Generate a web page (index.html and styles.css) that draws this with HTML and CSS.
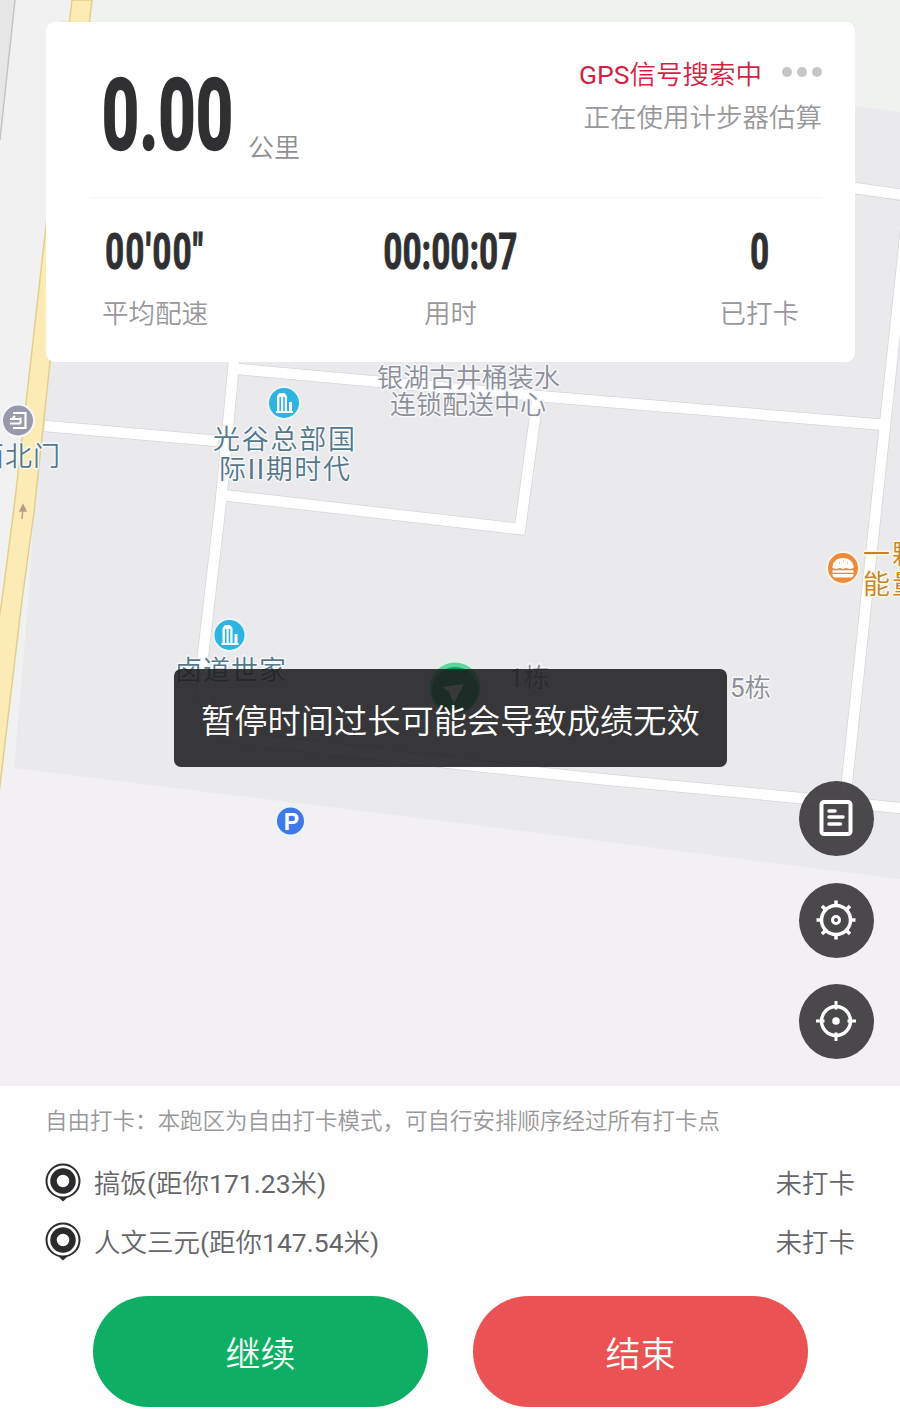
FILE: index.html
```
<!DOCTYPE html>
<html lang="zh-CN">
<head>
  <meta charset="UTF-8">
  <title>自由跑</title>
  <link rel="stylesheet" href="styles.css">
</head>
<body>

  <div class="run-page">
    <div class="map-area">
      <svg class="map" width="900" height="1086" viewBox="0 0 900 1086">
        <!-- land -->
        <rect width="900" height="1086" fill="#f2f0f3"/>
        <rect width="900" height="120" fill="#f0f2f0"/>
        <path d="M0 0H95L14 768H0Z" fill="#f1f1f2"/>
        <path d="M0 0H15L0 140Z" fill="#e6e6e6"/>
        <path d="M15 0L0 140" stroke="#c4c4c4" stroke-width="1.5"/>
        <path d="M60 20L856 106L900 112V879L450 822L14 768L30 580Z" fill="#eae9eb"/>

        <!-- main road -->
        <path d="M72 0L45 235L32 350L15 500L2 600L-2 625V800L0 785L22 600L34 512L50 362L92 0Z" fill="#fdebb6" stroke="#e3cf8c" stroke-width="1.5"/>

        <!-- side streets: outline first, then the white fill -->
        <g class="road-edge">
          <path d="M236 340L221 500L203 655Q196 725 240 738L450 763L600 779L800 798L910 809"/>
          <path d="M45 426L218 441"/>
          <path d="M238 369L370 381L550 397L886 425"/>
          <path d="M907 220L893 350L861 650L845 800"/>
          <path d="M840 186L910 196"/>
          <path d="M222 495L450 521L520 529L538 395"/>
        </g>
        <g class="road-fill">
          <path d="M236 340L221 500L203 655Q196 725 240 738L450 763L600 779L800 798L910 809"/>
          <path d="M45 426L218 441"/>
          <path d="M238 369L370 381L550 397L886 425"/>
          <path d="M907 220L893 350L861 650L845 800"/>
          <path d="M840 186L910 196"/>
          <path d="M222 495L450 521L520 529L538 395"/>
        </g>
        <path d="M22 519L23 507M20 511L23 505L26 511Z" fill="#b79f85" stroke="#b79f85" stroke-width="1.5"/>

        <!-- labels -->
        <g class="label label-grey">
          <text x="377" y="387" textLength="183">银湖古井桶装水</text>
          <text x="390" y="414" textLength="156">连锁配送中心</text>
          <text x="509" y="687"><tspan class="latin">1</tspan>栋</text>
          <text x="730" y="697"><tspan class="latin">5</tspan>栋</text>
        </g>
        <g class="label label-blue">
          <text x="213" y="449" textLength="142">光谷总部国</text>
          <text x="219" y="479" textLength="131">际<tspan class="latin">II</tspan>期时代</text>
          <text x="-23" y="466" textLength="83">西北门</text>
          <text x="175" y="680" textLength="111">卤道世家</text>
        </g>
        <g class="label label-orange">
          <text x="863" y="564" textLength="56">一颗</text>
          <text x="863" y="594" textLength="56">能量</text>
        </g>

        <!-- markers -->
        <g transform="translate(284 403)">
          <circle r="16" fill="#2fb3e0" stroke="#e9f6fb" stroke-width="2"/>
          <path d="M-8 10V8H-7V-7L-4.500 -10H0.500L3 -7V8H5V-1H8V8H9V10Z" fill="#fff"/>
          <path d="M-3.800 -6V8M0 -6V8" stroke="#2fb3e0" stroke-width="1.6"/>
        </g>
        <g transform="translate(229.500 635)">
          <circle r="16" fill="#2fb3e0" stroke="#e9f6fb" stroke-width="2"/>
          <path d="M-8 10V8H-7V-7L-4.500 -10H0.500L3 -7V8H5V-1H8V8H9V10Z" fill="#fff"/>
          <path d="M-3.800 -6V8M0 -6V8" stroke="#2fb3e0" stroke-width="1.6"/>
        </g>
        <g transform="translate(18 420.500)">
          <circle r="16" fill="#9899aa" stroke="#f7f7fa" stroke-width="2"/>
          <path d="M-5 -7.500H7.500V7.500H-5M-8 -1.500H2.500M-6 -1.500L-3 -4.500M-8 3H2.500M2.500 -3V3" fill="none" stroke="#fff" stroke-width="2.2"/>
        </g>
        <g transform="translate(843 568)">
          <circle r="16" fill="#ec8b3b" stroke="#fdf3e6" stroke-width="2"/>
          <path d="M-10.500 0C-11 -6 -6 -10 0 -10S11 -6 10.500 0L7 1L3 0L0 1L-3 0L-7 1ZM-10.500 6H10.500V7Q10 9.500 8 9.500H-8Q-10 9.500 -10.500 7Z" fill="#fff"/>
          <path d="M-10.500 3.500H10.500" stroke="#fff" stroke-width="2.4"/>
          <path d="M-4 -5h1M0 -7h1M4 -5h1" stroke="#ec8b3b"/>
        </g>
        <g transform="translate(290.500 821)">
          <circle r="14.500" fill="#3f78e8" stroke="#e8f3fc" stroke-width="2"/>
          <text class="parking" x="1" y="8.500">P</text>
        </g>

        <!-- own position -->
        <circle cx="455" cy="688" r="29" fill="#ddf5ea" fill-opacity="0.7"/>
        <circle cx="455" cy="688" r="25.500" fill="#5fd3a0"/>
        <circle cx="455" cy="690" r="23" fill="#08a05a"/>
        <path d="M442 687L464 684L454 703L449 692Z" fill="#fff"/>
      </svg>

      <div class="data-card">
        <div class="card-top">
          <div class="distance">
            <span class="distance-num">0.00</span>
            <span class="distance-unit">公里</span>
          </div>
          <div class="gps">
            <div class="gps-status">
              <span class="latin">GPS</span>信号搜索中
              <span class="dots"><i></i><i></i><i></i></span>
            </div>
            <div class="gps-tip">正在使用计步器估算</div>
          </div>
        </div>
        <div class="stats">
          <div class="stat">
            <div class="stat-num pace">00'00"</div>
            <div class="stat-name">平均配速</div>
          </div>
          <div class="stat">
            <div class="stat-num">00:00:07</div>
            <div class="stat-name">用时</div>
          </div>
          <div class="stat">
            <div class="stat-num">0</div>
            <div class="stat-name">已打卡</div>
          </div>
        </div>
      </div>

      <div class="toast">暂停时间过长可能会导致成绩无效</div>

      <div class="tools">
        <button class="tool">
          <svg width="45" height="45" viewBox="-22 -22 45 45">
            <rect x="-14.500" y="-16" width="29" height="32" rx="2.500" stroke-width="4"/>
            <path d="M-7 -7H-1M-7 -1H7M-7 6H4.500" stroke-width="3.500" stroke-linecap="round"/>
          </svg>
        </button>
        <button class="tool">
          <svg width="45" height="45" viewBox="-22 -22 45 45">
            <circle r="14.500" stroke-width="3.500"/>
            <circle r="3.500" stroke-width="3"/>
            <path d="M0 -15V-19.500M0 15V19.500M-15 0H-19.500M15 0H19.500M-10.500 -10.500L-14 -14M10.500 -10.500L14 -14M-10.500 10.500L-14 14M10.500 10.500L14 14" stroke-width="3.500"/>
          </svg>
        </button>
        <button class="tool">
          <svg width="45" height="45" viewBox="-22 -22 45 45">
            <circle r="14.500" stroke-width="3.500"/>
            <circle r="3.800" fill="#fff" stroke="none"/>
            <path d="M0 -11.500V-20M0 11.500V20M-11.500 0H-20M11.500 0H20" stroke-width="3"/>
          </svg>
        </button>
      </div>
    </div>

    <div class="panel">
      <p class="panel-tip">自由打卡：本跑区为自由打卡模式，可自行安排顺序经过所有打卡点</p>
      <div class="point">
        <svg class="pin" width="36" height="40" viewBox="0 0 36 40">
          <path d="M12 33L18 38.500L24 33Z" fill="#2b2b2e"/>
          <circle cx="18" cy="18" r="16.500" fill="#fff" stroke="#2b2b2e" stroke-width="2"/>
          <circle cx="18" cy="18" r="9.500" fill="#fff" stroke="#2b2b2e" stroke-width="6.500"/>
        </svg>
        <span class="point-name">搞饭<span class="latin">(</span>距你<span class="latin">171.23</span>米<span class="latin">)</span></span>
        <span class="point-state">未打卡</span>
      </div>
      <div class="point">
        <svg class="pin" width="36" height="40" viewBox="0 0 36 40">
          <path d="M12 33L18 38.500L24 33Z" fill="#2b2b2e"/>
          <circle cx="18" cy="18" r="16.500" fill="#fff" stroke="#2b2b2e" stroke-width="2"/>
          <circle cx="18" cy="18" r="9.500" fill="#fff" stroke="#2b2b2e" stroke-width="6.500"/>
        </svg>
        <span class="point-name">人文三元<span class="latin">(</span>距你<span class="latin">147.54</span>米<span class="latin">)</span></span>
        <span class="point-state">未打卡</span>
      </div>
      <div class="actions">
        <button class="btn btn-continue">继续</button>
        <button class="btn btn-end">结束</button>
      </div>
    </div>
  </div>

</body>
</html>
```
FILE: styles.css
```
* {
  box-sizing: border-box;
  margin: 0;
  padding: 0;
}

body {
  font-family: Roboto, "Noto Sans CJK SC", sans-serif;
  font-weight: 350;
  background: #fff;
}

button {
  border: none;
  font-family: inherit;
  cursor: pointer;
}

.latin {
  font-weight: 400;
}

.run-page {
  width: 900px;
  height: 1428px;
  overflow: hidden;
}

/* map */
.map-area {
  position: relative;
  height: 1086px;
  padding: 22px 45px 0 46px;
}

.map {
  position: absolute;
  top: 0;
  left: 0;
}

.road-edge path,
.road-fill path {
  fill: none;
  stroke: #d6d6da;
  stroke-width: 12px;
}

.road-fill path {
  stroke: #fff;
  stroke-width: 10.5px;
}

.label {
  font-size: 26px;
  paint-order: stroke;
  stroke: #f6f7f9;
  stroke-width: 3px;
  stroke-linejoin: round;
}

.label-grey {
  fill: #8c8e98;
}

.label-blue {
  font-size: 27px;
  fill: #54788a;
}

.label-orange {
  font-size: 27px;
  fill: #c98524;
  stroke: #fdf6ea;
}

.parking {
  font-family: "Liberation Sans", sans-serif;
  font-size: 23px;
  font-weight: 700;
  fill: #fff;
  text-anchor: middle;
}

/* data card */
.data-card {
  position: relative;
  height: 340px;
  padding: 0 33px 0 44px;
  background: #fff;
  border-radius: 9px;
}

.card-top {
  display: flex;
  justify-content: space-between;
  height: 177px;
  padding-left: 12px;
  border-bottom: 2px solid #f9f9f9;
}

.distance {
  display: flex;
  align-items: flex-start;
  padding-top: 34px;
}

.distance-num {
  width: 146px;
  font-size: 99px;
  line-height: 118px;
  font-weight: 700;
  color: #303032;
  -webkit-text-stroke: 2.5px #303032;
  letter-spacing: 0.8px;
  transform: scaleX(0.65);
  transform-origin: left;
}

.distance-unit {
  margin-top: 72px;
  font-size: 26px;
  line-height: 40px;
  color: #909092;
}

.gps {
  padding-top: 33px;
  text-align: right;
  font-size: 26.5px;
  line-height: 40px;
}

.gps-status {
  display: flex;
  align-items: center;
  justify-content: flex-end;
  color: #d41f45;
}

.dots {
  display: flex;
  gap: 5px;
  margin: -6px 0 0 20px;
}

.dots i {
  width: 10px;
  height: 10px;
  border-radius: 50%;
  background: #c6c6c8;
}

.gps-tip {
  margin-top: 3px;
  color: #98989c;
}

.stats {
  display: grid;
  grid-template-columns: 1fr auto 1fr;
  padding: 25px 23px 0 12px;
}

.stat {
  text-align: center;
}

.stat:first-child {
  justify-self: start;
  width: 106px;
}

.stat:last-child {
  justify-self: end;
}

.stat-num {
  display: flex;
  justify-content: center;
  font-size: 49.5px;
  line-height: 56px;
  font-weight: 700;
  white-space: nowrap;
  color: #303032;
  -webkit-text-stroke: 1.2px #303032;
  letter-spacing: 0.6px;
  transform: scaleX(0.66);
}

.pace {
  letter-spacing: 2.2px;
}

.stat-name {
  margin-top: 14px;
  font-size: 26.5px;
  line-height: 40px;
  color: #98989c;
}

/* message over the map */
.toast {
  position: absolute;
  top: 669px;
  left: 174px;
  width: 553px;
  height: 98px;
  padding-top: 28px;
  background: rgba(30, 28, 31, 0.88);
  border-radius: 7px;
  color: #fff;
  font-size: 33.25px;
  line-height: 50px;
  text-align: center;
  white-space: nowrap;
}

.tools {
  position: absolute;
  top: 781px;
  right: 26px;
  display: flex;
  flex-direction: column;
  gap: 26.5px;
}

.tool {
  display: flex;
  align-items: center;
  justify-content: center;
  width: 75px;
  height: 75px;
  border-radius: 50%;
  background: rgba(60, 57, 60, 0.92);
}

.tool svg {
  fill: none;
  stroke: #fff;
}

/* bottom panel */
.panel {
  height: 342px;
  padding: 20px 45px 0;
  background: #fefefe;
}

.panel-tip {
  margin-bottom: 13px;
  font-size: 22.5px;
  line-height: 30px;
  white-space: nowrap;
  color: #98989a;
}

.point {
  display: flex;
  align-items: center;
  height: 59px;
  font-size: 26.5px;
  color: #66666a;
  padding: 5px 0 0;
}

.pin {
  margin: 4px 13px 0 0;
}

.point-state {
  margin-left: auto;
}

.actions {
  display: flex;
  gap: 45px;
  margin-top: 29px;
  padding-left: 48px;
}

.btn {
  width: 335px;
  height: 111px;
  border-radius: 56px;
  color: #f5fff8;
  font-size: 35px;
  font-weight: 350;
}

.btn-continue {
  background: #0eae64;
}

.btn-end {
  background: #ea5253;
}
```
